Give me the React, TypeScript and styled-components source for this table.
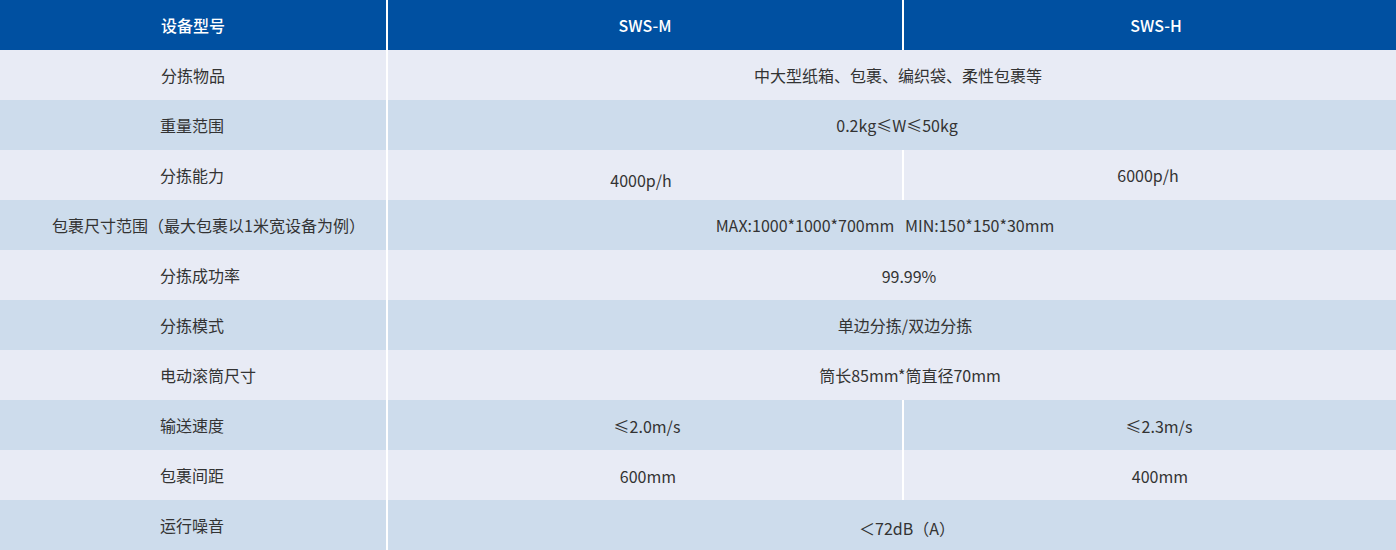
import React from 'react';
import styled, { createGlobalStyle } from 'styled-components';

const GlobalStyle = createGlobalStyle`
  html, body {
    margin: 0;
    padding: 0;
    background: #ffffff;
  }
  body {
    font-family: "Noto Sans CJK SC", "Noto Sans", sans-serif;
  }
`;

const SpecTable = styled.table`
  width: 1396px;
  table-layout: fixed;
  border-collapse: separate;
  border-spacing: 0;
  font-size: 16px;
  color: #333333;
`;

const HeadRow = styled.tr`
  background: #0050a1;
`;

const HeadCell = styled.th<{ $nudge?: number }>`
  height: 50px;
  padding: 0;
  color: #ffffff;
  font-weight: 500;
  font-size: 16px;
  text-align: center;
  vertical-align: middle;
  text-indent: ${props => (props.$nudge || 0) * 2}px;
  & + & {
    border-left: 2px solid #ffffff;
  }
`;

const BodyRow = styled.tr<{ $even: boolean }>`
  background: ${props => (props.$even ? '#cddcec' : '#e8ebf5')};
`;

const LabelCell = styled.td<{ $indent: number }>`
  height: 50px;
  padding: 0 0 0 ${props => props.$indent}px;
  box-sizing: border-box;
  text-align: left;
  vertical-align: middle;
  white-space: nowrap;
`;

const ValueCell = styled.td<{ $drop?: number; $nudge?: number }>`
  height: 50px;
  padding: ${props => props.$drop || 0}px 0 0;
  box-sizing: border-box;
  border-left: 2px solid #ffffff;
  text-align: center;
  vertical-align: middle;
  white-space: nowrap;
  text-indent: ${props => (props.$nudge || 0) * 2}px;
`;

interface SpecValue {
  text: string;
  nudge?: number;
  drop?: number;
}

interface SpecRow {
  label: string;
  indent?: number;
  values: SpecValue[];
}

const rows: SpecRow[] = [
  { label: '分拣物品', indent: 161, values: [{ text: '中大型纸箱、包裹、编织袋、柔性包裹等', nudge: 6 }] },
  { label: '重量范围', values: [{ text: '0.2kg≤W≤50kg', nudge: 5 }] },
  {
    label: '分拣能力',
    values: [
      { text: '4000p/h', nudge: -4, drop: 10 },
      { text: '6000p/h', nudge: -2 },
    ],
  },
  {
    label: '包裹尺寸范围（最大包裹以1米宽设备为例）',
    indent: 52,
    values: [{ text: 'MAX:1000*1000*700mm\u00a0\u00a0 MIN:150*150*30mm', nudge: -7 }],
  },
  { label: '分拣成功率', values: [{ text: '99.99%', nudge: 17, drop: 2 }] },
  { label: '分拣模式', values: [{ text: '单边分拣/双边分拣', nudge: 13 }] },
  { label: '电动滚筒尺寸', values: [{ text: '筒长85mm*筒直径70mm', nudge: 18 }] },
  {
    label: '输送速度',
    values: [
      { text: '≤2.0m/s', nudge: 2, drop: 2 },
      { text: '≤2.3m/s', nudge: 9, drop: 2 },
    ],
  },
  {
    label: '包裹间距',
    values: [
      { text: '600mm', nudge: 3, drop: 2 },
      { text: '400mm', nudge: 10, drop: 2 },
    ],
  },
  { label: '运行噪音', values: [{ text: '＜72dB（A）', nudge: 15, drop: 6 }] },
];

const App: React.FC = () => {
  return (
    <>
      <GlobalStyle />
      <SpecTable>
        <colgroup>
          <col style={{ width: 386 }} />
          <col style={{ width: 516 }} />
          <col style={{ width: 494 }} />
        </colgroup>
        <thead>
          <HeadRow>
            <HeadCell>设备型号</HeadCell>
            <HeadCell>SWS-M</HeadCell>
            <HeadCell $nudge={6}>SWS-H</HeadCell>
          </HeadRow>
        </thead>
        <tbody>
          {rows.map((row, i) => (
            <BodyRow key={row.label} $even={i % 2 === 1}>
              <LabelCell $indent={row.indent ?? 160}>{row.label}</LabelCell>
              {row.values.map((v, j) => (
                <ValueCell
                  key={j}
                  colSpan={row.values.length === 1 ? 2 : 1}
                  $drop={v.drop}
                  $nudge={v.nudge}
                >
                  {v.text}
                </ValueCell>
              ))}
            </BodyRow>
          ))}
        </tbody>
      </SpecTable>
    </>
  );
};

export default App;
